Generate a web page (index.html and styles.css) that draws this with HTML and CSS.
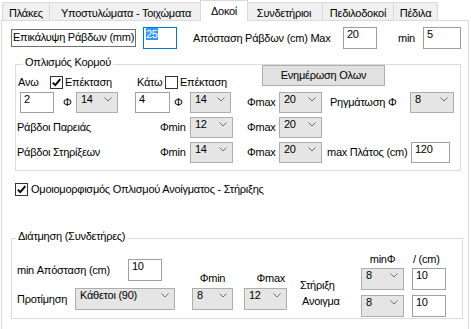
FILE: index.html
```html
<!DOCTYPE html>
<html lang="el">
<head>
<meta charset="utf-8">
<title>Δοκοί</title>
<link rel="stylesheet" href="styles.css">
</head>
<body>
<div class="tabs">
    <div class="tab tab-plakes">Πλάκες</div>
    <div class="tab tab-ypost">Υποστυλώματα - Τοιχώματα</div>
    <div class="tab tab-dokoi active">Δοκοί</div>
    <div class="tab tab-synd">Συνδετήριοι</div>
    <div class="tab tab-pedilod">Πεδιλοδοκοί</div>
    <div class="tab tab-pedila">Πέδιλα</div>
</div>

<div class="page">
    <!-- cover and bar distance -->
    <div class="row cover-row">
        <div class="boxed-label">Επικάλυψη Ράβδων (mm)</div>
        <div class="tb focused cover-input"><span class="selected">25</span></div>
        <span class="lbl dist-label">Απόσταση Ράβδων (cm) Max</span>
        <div class="tb w34">20</div>
        <span class="lbl min-label">min</span>
        <div class="tb w38">5</div>
    </div>

    <!-- web reinforcement -->
    <div class="group web-group">
        <div class="group-title">Οπλισμός Κορμού</div>
        <div class="row row-top">
            <div class="ext">
                <span class="lbl w32 ml2">Ανω</span>
                <span class="chk"><svg width="11" height="11" viewBox="0 0 11 11"><path d="M1.8 5.6 L4.3 8.2 L9.3 2.2" fill="none" stroke="#000" stroke-width="1.9"/></svg></span>
                <span class="lbl w72 ml2">Επέκταση</span>
                <span class="lbl w28">Κάτω</span>
                <span class="chk"></span>
                <span class="lbl w82 ml2">Επέκταση</span>
            </div>
            <div class="btn">Ενημέρωση Ολων</div>
        </div>

        <div class="row bar-row first">
            <div class="tb w34 ml4">2</div>
            <span class="lbl phi ml9 w13">Φ</span>
            <div class="cb w42"><span>14</span><svg width="8" height="5" viewBox="0 0 8 5"><path d="M0.5 0.5 L4 4 L7.5 0.5" fill="none" stroke="#707070"/></svg></div>
            <div class="tb w35 ml17">4</div>
            <span class="lbl phi ml4 w16">Φ</span>
            <div class="cb w41"><span>14</span><svg width="8" height="5" viewBox="0 0 8 5"><path d="M0.5 0.5 L4 4 L7.5 0.5" fill="none" stroke="#707070"/></svg></div>
            <span class="lbl ml16 w32">Φmax</span>
            <div class="cb w43"><span>20</span><svg width="8" height="5" viewBox="0 0 8 5"><path d="M0.5 0.5 L4 4 L7.5 0.5" fill="none" stroke="#707070"/></svg></div>
            <span class="lbl ml8 w80">Ρηγμάτωση Φ</span>
            <div class="cb w44"><span>8</span><svg width="8" height="5" viewBox="0 0 8 5"><path d="M0.5 0.5 L4 4 L7.5 0.5" fill="none" stroke="#707070"/></svg></div>
        </div>

        <div class="row bar-row">
            <span class="lbl ml1 w143">Ράβδοι Παρειάς</span>
            <span class="lbl w30">Φmin</span>
            <div class="cb w43"><span>12</span><svg width="8" height="5" viewBox="0 0 8 5"><path d="M0.5 0.5 L4 4 L7.5 0.5" fill="none" stroke="#707070"/></svg></div>
            <span class="lbl ml14 w32">Φmax</span>
            <div class="cb w43"><span>20</span><svg width="8" height="5" viewBox="0 0 8 5"><path d="M0.5 0.5 L4 4 L7.5 0.5" fill="none" stroke="#707070"/></svg></div>
        </div>

        <div class="row bar-row">
            <span class="lbl ml1 w143">Ράβδοι Στηρίξεων</span>
            <span class="lbl w30">Φmin</span>
            <div class="cb w43"><span>14</span><svg width="8" height="5" viewBox="0 0 8 5"><path d="M0.5 0.5 L4 4 L7.5 0.5" fill="none" stroke="#707070"/></svg></div>
            <span class="lbl ml14 w32">Φmax</span>
            <div class="cb w43"><span>20</span><svg width="8" height="5" viewBox="0 0 8 5"><path d="M0.5 0.5 L4 4 L7.5 0.5" fill="none" stroke="#707070"/></svg></div>
            <span class="lbl ml5 w84">max Πλάτος (cm)</span>
            <div class="tb w39">120</div>
        </div>
    </div>

    <div class="row uniform-row">
        <span class="chk"><svg width="11" height="11" viewBox="0 0 11 11"><path d="M1.8 5.6 L4.3 8.2 L9.3 2.2" fill="none" stroke="#000" stroke-width="1.9"/></svg></span>
        <span class="lbl ml3">Ομοιομορφισμός Οπλισμού Ανοίγματος - Στήριξης</span>
    </div>

    <!-- shear -->
    <div class="group shear-group">
        <div class="group-title">Διάτμηση (Συνδετήρες)</div>
        <div class="shear-cols">
            <div class="col col-a">
                <div class="row sh-row-a">
                    <span class="lbl w111">min Απόσταση (cm)</span>
                    <div class="tb tall w34">10</div>
                </div>
                <div class="row sh-row-b">
                    <span class="lbl w58">Προτίμηση</span>
                    <div class="cb tall w100"><span>Κάθετοι (90)</span><svg width="8" height="5" viewBox="0 0 8 5"><path d="M0.5 0.5 L4 4 L7.5 0.5" fill="none" stroke="#707070"/></svg></div>
                </div>
            </div>
            <div class="col col-b">
                <span class="col-head center">Φmin</span>
                <div class="cb tall"><span>8</span><svg width="8" height="5" viewBox="0 0 8 5"><path d="M0.5 0.5 L4 4 L7.5 0.5" fill="none" stroke="#707070"/></svg></div>
            </div>
            <div class="col col-c">
                <span class="col-head right">Φmax</span>
                <div class="cb tall"><span>12</span><svg width="8" height="5" viewBox="0 0 8 5"><path d="M0.5 0.5 L4 4 L7.5 0.5" fill="none" stroke="#707070"/></svg></div>
            </div>
            <div class="col col-d">
                <span class="lbl support-lbl">Στήριξη</span>
                <span class="lbl span-lbl">Ανοιγμα</span>
            </div>
            <div class="col col-e">
                <span class="col-head center top-head">minΦ</span>
                <div class="cb tall"><span>8</span><svg width="8" height="5" viewBox="0 0 8 5"><path d="M0.5 0.5 L4 4 L7.5 0.5" fill="none" stroke="#707070"/></svg></div>
                <div class="cb tall second"><span>8</span><svg width="8" height="5" viewBox="0 0 8 5"><path d="M0.5 0.5 L4 4 L7.5 0.5" fill="none" stroke="#707070"/></svg></div>
            </div>
            <div class="col col-f">
                <span class="col-head top-head">/ (cm)</span>
                <div class="tb tall">10</div>
                <div class="tb tall second">10</div>
            </div>
        </div>
    </div>
</div>
</body>
</html>
```

FILE: styles.css
```css
body {
    margin: 0;
    background: #fff;
    font: 11px "Liberation Sans", Arial, sans-serif;
    letter-spacing: -0.25px;
    color: #000;
}

/* tab strip */
.tabs {
    display: flex;
    align-items: flex-start;
    height: 20px;
    padding-left: 2px;
}
.tab {
    position: relative;
    z-index: 1;
    box-sizing: border-box;
    height: 18px;
    margin-top: 2px;
    margin-left: -1px;
    padding-top: 4px;
    border: 1px solid #d9d9d9;
    border-bottom: none;
    background: #f0f0f0;
    line-height: 13px;
    text-align: center;
    white-space: nowrap;
}
.tab-plakes { margin-left: 0; width: 48px; }
.tab-ypost { width: 154px; }
.tab-dokoi { width: 48px; }
.tab-synd { width: 78px; }
.tab-pedilod { width: 72px; }
.tab-pedila { width: 45px; }
.tab.active {
    z-index: 2;
    height: 21px;
    margin-top: 0;
    margin-left: -3px;
    margin-right: -2px;
    background: #fff;
}

/* tab page */
.page {
    box-sizing: border-box;
    width: 468px;
    height: 320px;
    margin-left: 1px;
    border: 1px solid #d9d9d9;
    background: #fff;
}

.row {
    display: flex;
    align-items: center;
}
.lbl {
    display: inline-block;
    line-height: 13px;
    white-space: nowrap;
}

/* controls */
.tb, .cb {
    box-sizing: border-box;
    height: 21px;
    line-height: 13px;
    white-space: nowrap;
}
.tb {
    padding-left: 3px;
    border: 1px solid #a0a0a0;
    background: #fff;
}
.cb {
    display: flex;
    justify-content: space-between;
    align-items: flex-start;
    padding: 0 5px 0 4px;
    border: 1px solid #adadad;
    background: #e5e5e5;
}
.cb svg {
    margin-top: 4px;
}
.tall {
    height: 22px;
}
.tb.focused {
    border-color: #0078d7;
}
.selected {
    background: #3399ff;
    color: #fff;
}
.chk {
    box-sizing: border-box;
    display: inline-flex;
    align-items: center;
    justify-content: center;
    width: 13px;
    height: 13px;
    border: 1px solid #333;
    background: #fff;
}
.btn {
    box-sizing: border-box;
    width: 123px;
    height: 21px;
    border: 1px solid #adadad;
    background: #e1e1e1;
    line-height: 18px;
    text-align: center;
}

/* first line */
.cover-row {
    height: 22px;
    margin-top: 6px;
}
.cover-row .tb {
    height: 22px;
}
.boxed-label {
    box-sizing: border-box;
    width: 125px;
    height: 18px;
    margin-left: 9px;
    padding-left: 1px;
    border: 1px solid #6e6e6e;
    line-height: 15px;
    white-space: nowrap;
}
.cover-input {
    width: 34px;
    margin-left: 7px;
    padding-left: 2px;
}
.dist-label { margin-left: 16px; width: 150px; }
.min-label { margin-left: 21px; width: 25px; }

/* group boxes */
.group {
    box-sizing: border-box;
    border: 1px solid #dcdcdc;
}
.group-title {
    width: max-content;
    margin: -9px 0 -4px 7px;
    padding: 0 2px;
    background: #fff;
    line-height: 13px;
}
.web-group {
    width: 446px;
    margin: 15px 0 0 13px;
    padding-bottom: 7px;
}
.row-top {
    align-items: flex-start;
}
.ext {
    display: flex;
    align-items: center;
    margin-top: 11px;
}
.bar-row {
    margin-top: 4px;
}
.bar-row.first {
    margin-top: 3px;
}
.phi {
    text-align: left;
}

.uniform-row {
    margin: 12px 0 0 13px;
}

.shear-group {
    width: 452px;
    margin: 42px 0 0 9px;
    padding-bottom: 1px;
}
.shear-group .group-title {
    margin-left: 4px;
}
.shear-cols {
    display: flex;
    align-items: flex-start;
}
.col {
    display: flex;
    flex-direction: column;
}
.col-a { margin-left: 5px; width: 158px; }
.col-b { margin-left: 17px; width: 41px; }
.col-c { margin-left: 11px; width: 43px; }
.col-d { margin-left: 13px; width: 61px; }
.col-e { width: 43px; }
.col-f { margin-left: 8px; width: 34px; }

.sh-row-a { margin-top: 20px; }
.sh-row-b { margin-top: 7px; }
.col-head {
    margin-top: 33px;
    margin-bottom: 3px;
    line-height: 13px;
    white-space: nowrap;
}
.col-head.center { text-align: center; }
.col-head.right { text-align: right; padding-right: 2px; }
.col-head.top-head {
    margin-top: 14px;
    margin-bottom: 2px;
    padding-left: 1px;
}
.col-e .col-head.top-head { padding-left: 0; }
.second { margin-top: 5px; }
.support-lbl { margin-top: 40px; }
.span-lbl { margin: 3px 0 0 2px; }

/* spacing helpers */
.ml1 { margin-left: 1px; }
.ml2 { margin-left: 2px; }
.ml3 { margin-left: 3px; }
.ml4 { margin-left: 4px; }
.ml5 { margin-left: 5px; }
.ml8 { margin-left: 8px; }
.ml9 { margin-left: 9px; }
.ml14 { margin-left: 14px; }
.ml16 { margin-left: 16px; }
.ml17 { margin-left: 17px; }
.w13 { width: 13px; }
.w16 { width: 16px; }
.w28 { width: 28px; }
.w30 { width: 30px; }
.w32 { width: 32px; }
.w34 { width: 34px; }
.w35 { width: 35px; }
.w38 { width: 38px; }
.w39 { width: 39px; }
.w41 { width: 41px; }
.w42 { width: 42px; }
.w43 { width: 43px; }
.w44 { width: 44px; }
.w58 { width: 58px; }
.w72 { width: 72px; }
.w80 { width: 80px; }
.w82 { width: 82px; }
.w83 { width: 83px; }
.w84 { width: 84px; }
.w100 { width: 100px; }
.w111 { width: 111px; }
.w143 { width: 143px; }
```
